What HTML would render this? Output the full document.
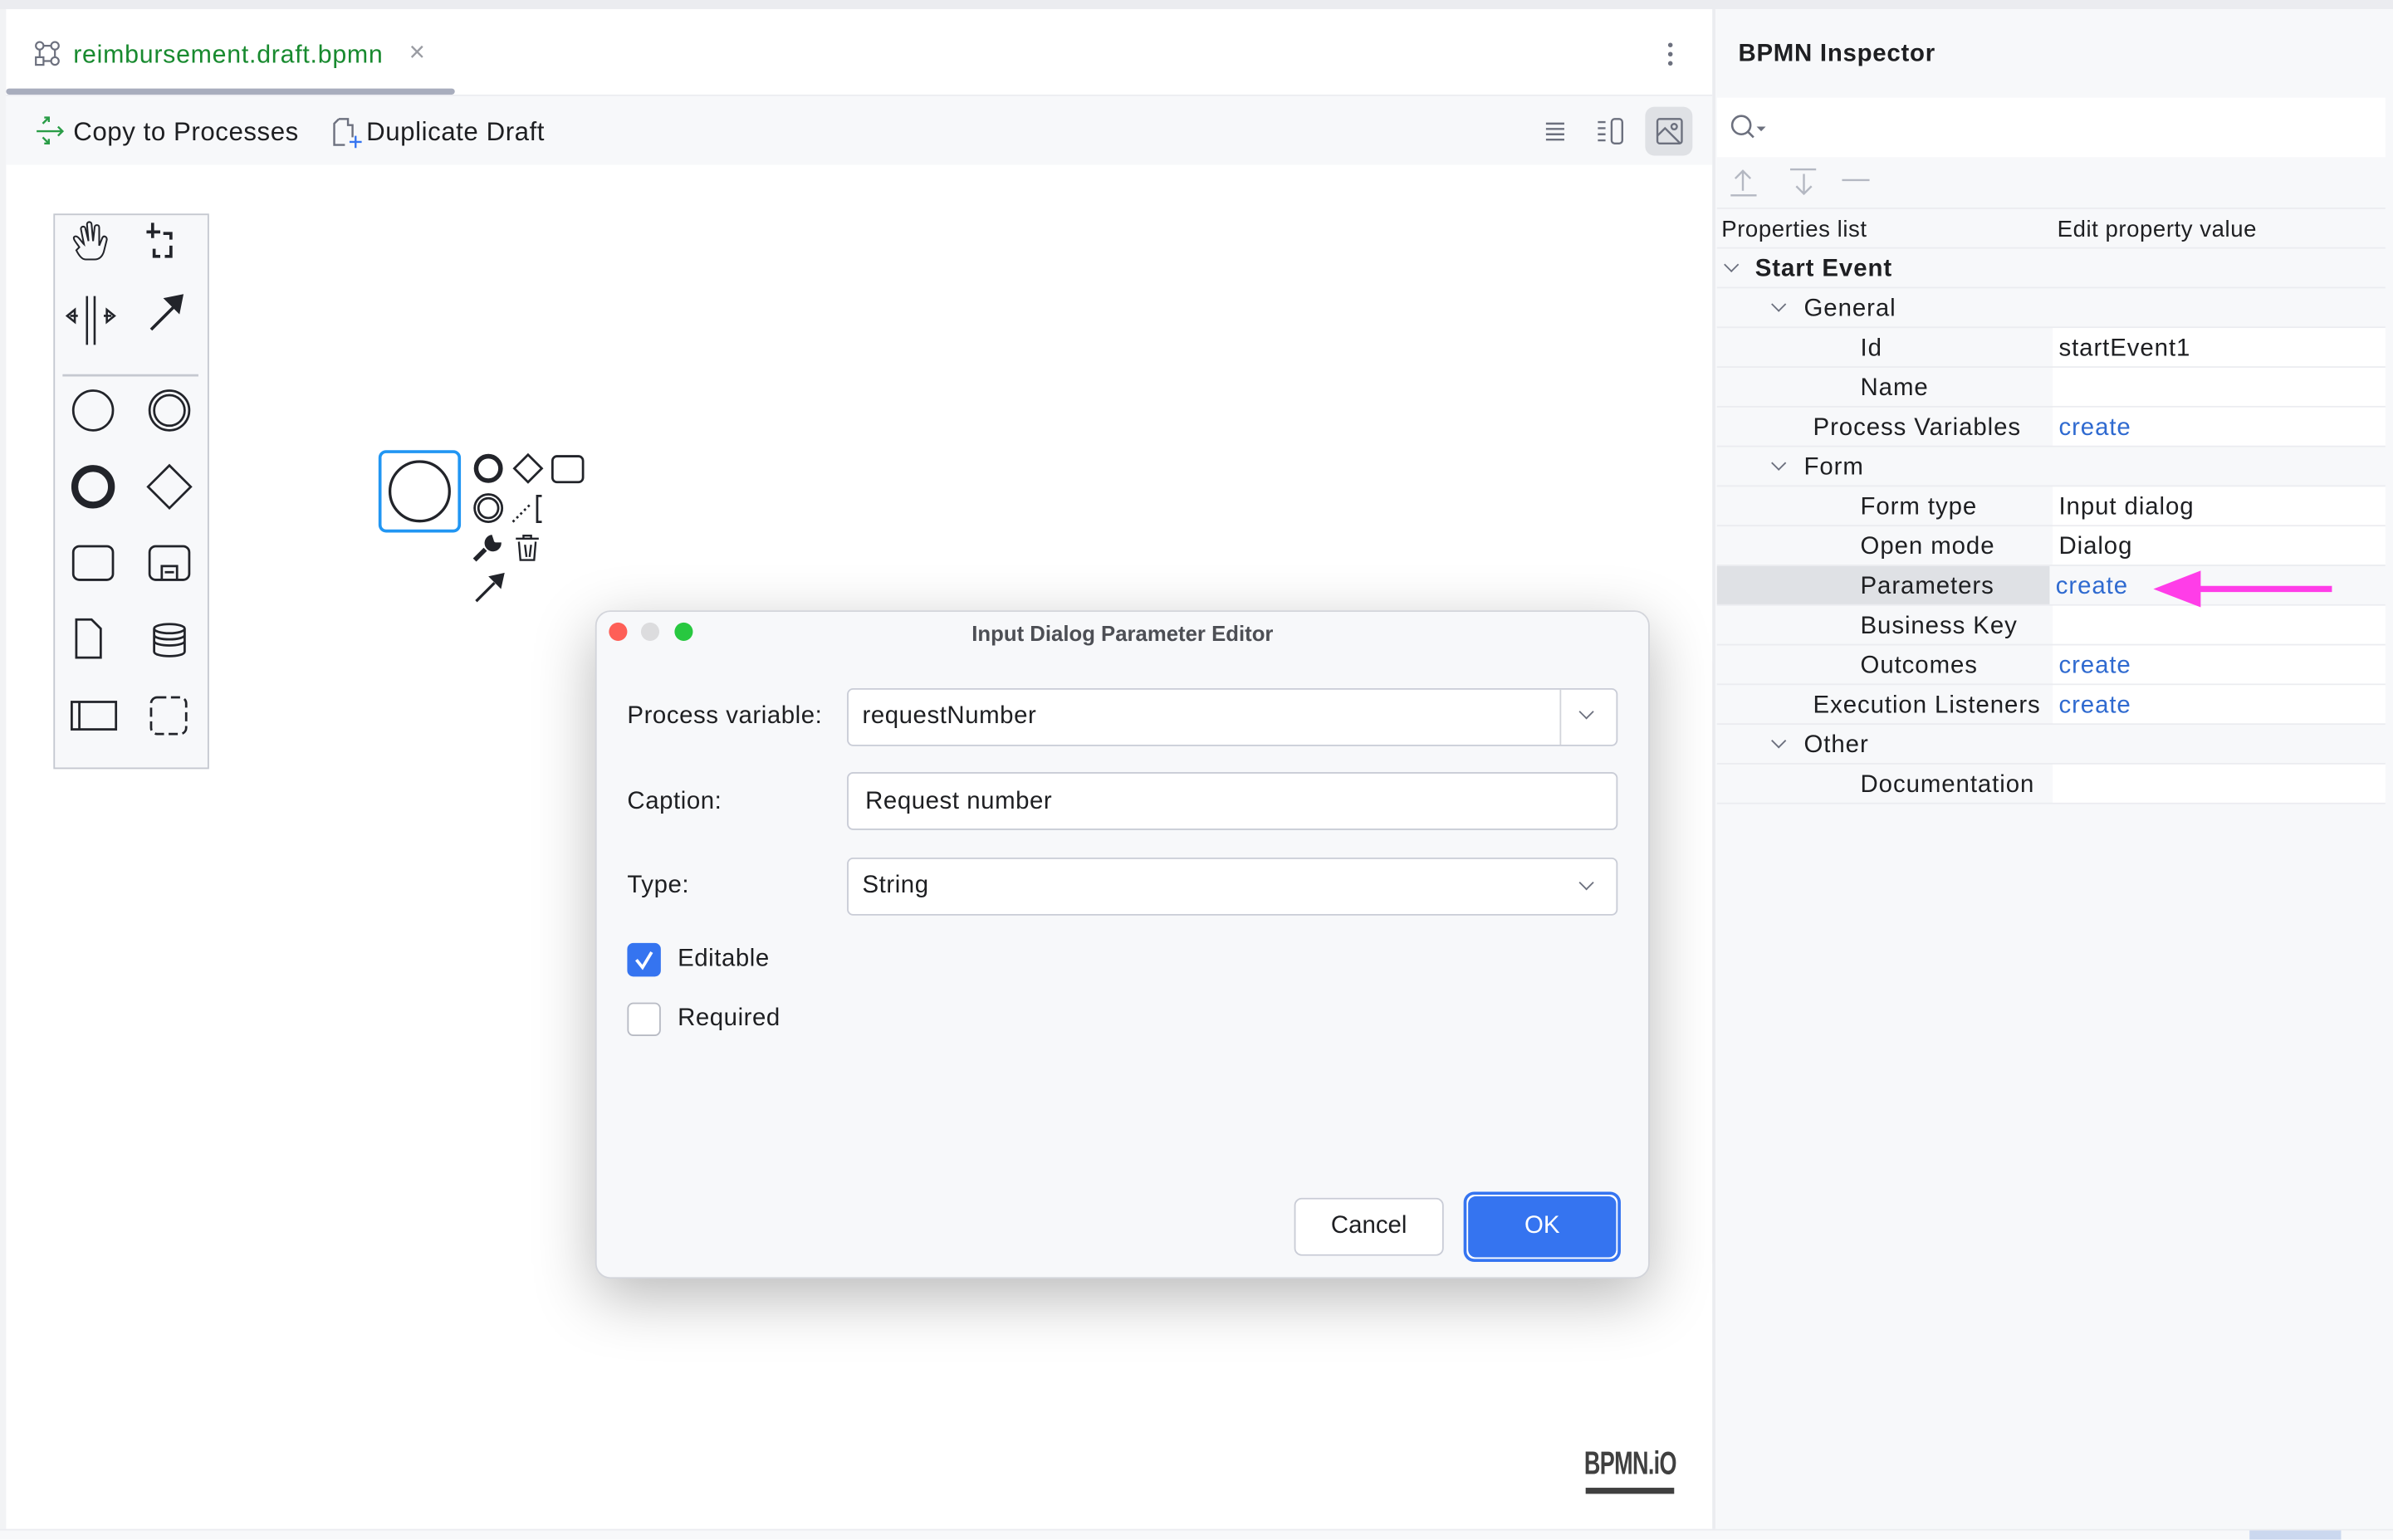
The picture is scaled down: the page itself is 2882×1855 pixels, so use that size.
<!DOCTYPE html>
<html><head><meta charset="utf-8"><style>
*{box-sizing:border-box;margin:0;padding:0}
html,body{width:2882px;height:1854px;overflow:hidden;background:#fff}
#root{position:absolute;left:0;top:0;width:1568px;height:1009px;transform:scale(1.838);transform-origin:0 0;font-family:"Liberation Sans",sans-serif;color:#1e1f22;background:#fff}
.a{position:absolute}
.t{position:absolute;white-space:nowrap;font-size:16px;line-height:20px}
.row{position:absolute;left:1125px;width:438px;height:26px;border-bottom:1px solid #ebecf0}
.row .v{position:absolute;left:220px;top:0;width:218px;height:25px;background:#fff}
.row span{position:absolute;top:4px;font-size:16px;line-height:20px;white-space:nowrap;letter-spacing:.5px}
.lnk{color:#2f6ad0}
.chev{position:absolute;width:7px;height:7px;border-right:1.3px solid #6c707e;border-bottom:1.3px solid #6c707e;transform:rotate(45deg)}
.fld{position:absolute;background:#fff;border:1px solid #c9ccd6;border-radius:4px}
</style></head><body><div id="root">
<div class="a" style="left:0;top:0;width:1568px;height:6px;background:#ebecf0"></div>
<div class="a" style="left:0;top:6px;width:4px;height:1003px;background:#f2f3f5"></div>
<svg class="a" style="left:22px;top:26px" width="18" height="18" viewBox="0 0 18 18" fill="none" stroke="#6c707e" stroke-width="1.2"><circle cx="4" cy="4" r="2.5"/><circle cx="14" cy="4" r="2.5"/><rect x="1.5" y="11.5" width="5" height="5"/><circle cx="14" cy="14" r="2.5"/><path d="M4 6.5v5M6.5 4h5M14 6.5v5M6.5 14h5"/></svg>
<div class="t" style="left:48px;top:26px;color:#188a2f;font-size:16.5px;letter-spacing:.4px">reimbursement.draft.bpmn</div>
<div class="t" style="left:268px;top:24px;color:#9a9ca3;font-size:18px">×</div>
<div class="a" style="left:4px;top:58px;width:294px;height:4px;background:#a8adbd;border-radius:2px"></div>
<div class="a" style="left:4px;top:62px;width:1118px;height:1px;background:#ebecf0"></div>
<div class="a" style="left:1093px;top:28px;width:3px;height:3px;border-radius:50%;background:#6c707e;box-shadow:0 6px 0 #6c707e,0 12px 0 #6c707e"></div>
<div class="a" style="left:4px;top:63px;width:1118px;height:45px;background:#f7f8fa"></div>
<svg class="a" style="left:23px;top:75px" width="20" height="22" viewBox="0 0 20 22" fill="none" stroke="#2a9d47" stroke-width="1.3"><path d="M1 11h17M15 8l3 3-3 3M6 2h3v3M9 2 5 6M6 19H9V16M9 19 5 15"/></svg>
<div class="t" style="left:48px;top:77px;font-size:17px;letter-spacing:.3px">Copy to Processes</div>
<svg class="a" style="left:217px;top:76px" width="22" height="22" viewBox="0 0 22 22" fill="none" stroke-width="1.3"><path d="M5 2h6v4h3v8M5 2 2 5v14h7" stroke="#6c707e"/><path d="M16 13v8M12 17h8" stroke="#3574f0"/></svg>
<div class="t" style="left:240px;top:77px;font-size:17px;letter-spacing:.3px">Duplicate Draft</div>
<svg class="a" style="left:1011px;top:78px" width="16" height="16" viewBox="0 0 16 16" stroke="#6c707e" stroke-width="1.3"><path d="M2 3h12M2 6.5h12M2 10h12M2 13.5h12"/></svg>
<svg class="a" style="left:1045px;top:76px" width="24" height="20" viewBox="0 0 24 20" fill="none" stroke="#6c707e" stroke-width="1.3"><path d="M2 4h5M2 8h5M2 12h5M2 16h5"/><rect x="11" y="2" width="7" height="16" rx="2"/></svg>
<div class="a" style="left:1078px;top:70px;width:31px;height:32px;background:#dfe1e5;border-radius:6px"></div>
<svg class="a" style="left:1084px;top:76px" width="20" height="20" viewBox="0 0 20 20" fill="none" stroke="#6c707e" stroke-width="1.3"><rect x="2" y="2" width="16" height="16" rx="1.5"/><circle cx="13" cy="7" r="1.8"/><path d="M2 13l5-5 10 10"/></svg>
<div class="a" style="left:35px;top:140px;width:102px;height:364px;background:#f7f8fa;border:1px solid #c5c8d0"></div>
<svg class="a" style="left:35px;top:140px" width="102" height="364" viewBox="0 0 102 364" fill="none" stroke="#22242a" stroke-width="1.5">
<path d="M17 22c-2-3-5-6-3-7s4 3 6 5l-2-10c0-2 3-2 3 0l2 8-1-11c0-2 3-2 3 0l1 11 1-9c0-2 3-2 3 0v12l2-5c1-2 3-1 3 1l-2 8c-1 3-3 5-6 5h-6c-2 0-4-2-6-6z" stroke-width="1.1"/>
<path d="M61 12h9M65 6v10M72 13h5v4M77 21v7h-4M70 28h-4v-5" stroke-width="2"/>
<path d="M22 54v32M27 54v32M11 67l5 0M9 67l5-4v8zM38 67l-5 0M40 67l-5-4v8z" stroke-width="1.4"/>
<path d="M64 76l18-18M74 56l10-2-2 10z" fill="#22242a" stroke-width="2"/>
<path d="M6 106h89" stroke="#c5c8d0"/>
<circle cx="26" cy="129" r="13"/>
<circle cx="76" cy="129" r="13"/><circle cx="76" cy="129" r="10"/>
<circle cx="26" cy="179" r="12" stroke-width="4.5"/>
<path d="M76 165l14 14-14 14-14-14z"/>
<rect x="13" y="218" width="26" height="22" rx="4"/>
<rect x="63" y="218" width="26" height="22" rx="4"/><path d="M71 240v-9h10v9M73 235h6"/>
<path d="M15 266h10l6 6v19H15z"/>
<ellipse cx="76" cy="272" rx="10" ry="3"/><path d="M66 272v15c0 4 20 4 20 0v-15M66 276c0 4 20 4 20 0M66 280c0 4 20 4 20 0"/>
<rect x="12" y="320" width="29" height="18"/><path d="M17 320v18"/>
<rect x="64" y="317" width="23" height="24" rx="4" stroke-dasharray="6 3"/>
</svg>
<svg class="a" style="left:240px;top:290px" width="150" height="110" viewBox="240 290 150 110" fill="none" stroke="#22242a">
<rect x="249" y="296" width="52" height="52" rx="4" stroke="#2196f3" stroke-width="2"/>
<circle cx="275" cy="322" r="19.5" stroke-width="1.8"/>
<circle cx="320" cy="307" r="8" stroke-width="3"/>
<path d="M346 298l9 9-9 9-9-9z" stroke-width="1.5"/>
<rect x="362" y="299" width="20" height="17" rx="3" stroke-width="1.5"/>
<circle cx="320" cy="333" r="9" stroke-width="1.5"/><circle cx="320" cy="333" r="6.5" stroke-width="1.5"/>
<path d="M336 342l12-12" stroke-dasharray="1.5 2" stroke-width="1.5"/><path d="M355 325h-3v17h3" stroke-width="1.5"/>
<path d="M311 367l7-7" stroke-width="3"/><path d="M322 351a5 5 0 1 0 6 5l-3 0a2 2 0 0 1-2-2z" fill="#22242a"/>
<path d="M338 353h15M343 353v-2h5v2M340 355l1 12h9l1-12M344 357l1 8M348 357l-1 8" stroke-width="1.3"/>
<path d="M312 394l12-12" stroke-width="1.8"/><path d="M330 376l-9 2 7 7z" fill="#22242a"/>
</svg>
<div class="t" style="left:1038px;top:950px;font-size:21px;font-weight:bold;color:#404040;transform:scaleX(.7);transform-origin:0 0;letter-spacing:-0.5px">BPMN.iO</div>
<div class="a" style="left:1039px;top:975px;width:58px;height:4px;background:#404040"></div>
<div class="a" style="left:0;top:1002px;width:1568px;height:7px;background:#f7f8fa;border-top:1px solid #ebecf0"></div>
<div class="a" style="left:1474px;top:1003px;width:60px;height:6px;background:#cbd8ef"></div>
<div class="a" style="left:1122px;top:6px;width:446px;height:996px;background:#f7f8fa;border-left:2px solid #ebecf0"></div>
<div class="t" style="left:1139px;top:26px;font-weight:bold;font-size:16px;letter-spacing:.4px">BPMN Inspector</div>
<div class="a" style="left:1125px;top:64px;width:438px;height:39px;background:#fff"></div>
<svg class="a" style="left:1133px;top:74px" width="26" height="20" viewBox="0 0 26 20" fill="none" stroke="#6c707e" stroke-width="1.4"><circle cx="8" cy="8" r="6"/><path d="M12 12l4 4"/><path d="M18 9h6l-3 3z" fill="#6c707e" stroke="none"/></svg>
<svg class="a" style="left:1133px;top:108px" width="100" height="22" viewBox="0 0 100 22" fill="none" stroke="#b4b8c2" stroke-width="1.3"><path d="M1 20h17M9 17V4M4 9l5-5 5 5M40 3h17M49 6v13M44 14l5 5 5-5M74 10h18"/></svg>
<div class="a" style="left:1125px;top:136px;width:438px;height:1px;background:#ebecf0"></div>
<div class="t" style="left:1128px;top:141px;font-size:15px;letter-spacing:.3px">Properties list</div>
<div class="t" style="left:1348px;top:141px;font-size:15px;letter-spacing:.3px">Edit property value</div>
<div class="a" style="left:1125px;top:162px;width:438px;height:1px;background:#ebecf0"></div>
<div class="row" style="top:163px"><i class="chev" style="left:6px;top:7px"></i><span style="left:25px;font-weight:bold">Start Event</span></div>
<div class="row" style="top:189px"><i class="chev" style="left:37px;top:7px"></i><span style="left:57px">General</span></div>
<div class="row" style="top:215px"><div class="v"></div><span style="left:94px">Id</span><span style="left:224px">startEvent1</span></div>
<div class="row" style="top:241px"><div class="v"></div><span style="left:94px">Name</span></div>
<div class="row" style="top:267px"><div class="v"></div><span style="left:63px">Process Variables</span><span class="lnk" style="left:224px">create</span></div>
<div class="row" style="top:293px"><i class="chev" style="left:37px;top:7px"></i><span style="left:57px">Form</span></div>
<div class="row" style="top:319px"><div class="v"></div><span style="left:94px">Form type</span><span style="left:224px">Input dialog</span></div>
<div class="row" style="top:345px"><div class="v"></div><span style="left:94px">Open mode</span><span style="left:224px">Dialog</span></div>
<div class="row" style="top:371px"><div class="a" style="left:0;top:0;width:218px;height:25px;background:#dfe1e5"></div><span style="left:94px">Parameters</span><span class="lnk" style="left:222px">create</span></div>
<div class="row" style="top:397px"><div class="v"></div><span style="left:94px">Business Key</span></div>
<div class="row" style="top:423px"><div class="v"></div><span style="left:94px">Outcomes</span><span class="lnk" style="left:224px">create</span></div>
<div class="row" style="top:449px"><div class="v"></div><span style="left:63px">Execution Listeners</span><span class="lnk" style="left:224px">create</span></div>
<div class="row" style="top:475px"><i class="chev" style="left:37px;top:7px"></i><span style="left:57px">Other</span></div>
<div class="row" style="top:501px"><div class="v"></div><span style="left:94px">Documentation</span></div>
<svg class="a" style="left:1410px;top:372px" width="120" height="28" viewBox="0 0 120 28"><path d="M30 12h88v4H30z" fill="#ff3de8"/><path d="M1 14l31-12v24z" fill="#ff3de8"/></svg>
<div class="a" style="left:390px;top:400px;width:691px;height:438px;background:#f7f8fa;border:1px solid #d3d5db;border-radius:10px;box-shadow:0 12px 40px rgba(0,0,0,.28)"></div>
<div class="a" style="left:399px;top:408px;width:12px;height:12px;border-radius:50%;background:#fe5f57"></div>
<div class="a" style="left:420px;top:408px;width:12px;height:12px;border-radius:50%;background:#dcdcde"></div>
<div class="a" style="left:442px;top:408px;width:12px;height:12px;border-radius:50%;background:#28c840"></div>
<div class="t" style="left:390px;width:691px;text-align:center;top:405px;font-size:14px;font-weight:bold;color:#4d4f55">Input Dialog Parameter Editor</div>
<div class="t" style="left:411px;top:460px;letter-spacing:.3px">Process variable:</div>
<div class="fld" style="left:555px;top:451px;width:505px;height:38px"></div>
<div class="a" style="left:1022px;top:452px;width:1px;height:36px;background:#d3d5db"></div>
<i class="chev" style="left:1036px;top:463px;border-color:#6c707e"></i>
<div class="t" style="left:565px;top:460px;letter-spacing:.3px">requestNumber</div>
<div class="t" style="left:411px;top:516px;letter-spacing:.3px">Caption:</div>
<div class="fld" style="left:555px;top:506px;width:505px;height:38px"></div>
<div class="t" style="left:567px;top:516px;letter-spacing:.3px">Request number</div>
<div class="t" style="left:411px;top:571px;letter-spacing:.3px">Type:</div>
<div class="fld" style="left:555px;top:562px;width:505px;height:38px"></div>
<i class="chev" style="left:1036px;top:575px"></i>
<div class="t" style="left:565px;top:571px;letter-spacing:.3px">String</div>
<div class="a" style="left:411px;top:618px;width:22px;height:22px;background:#3574f0;border-radius:4px"></div>
<svg class="a" style="left:411px;top:618px" width="22" height="22" viewBox="0 0 22 22" fill="none" stroke="#fff" stroke-width="2"><path d="M6 11l4 5 6-10"/></svg>
<div class="t" style="left:444px;top:619px;letter-spacing:.3px">Editable</div>
<div class="a" style="left:411px;top:657px;width:22px;height:22px;background:#fff;border:1px solid #b8bbc4;border-radius:4px"></div>
<div class="t" style="left:444px;top:658px;letter-spacing:.3px">Required</div>
<div class="a" style="left:848px;top:785px;width:98px;height:38px;background:#fff;border:1px solid #c9ccd6;border-radius:5px"></div>
<div class="t" style="left:848px;width:98px;text-align:center;top:794px">Cancel</div>
<div class="a" style="left:959px;top:781px;width:103px;height:46px;border:2px solid #3574f0;border-radius:7px;background:#fff"></div>
<div class="a" style="left:962px;top:784px;width:97px;height:40px;background:#3574f0;border-radius:5px"></div>
<div class="t" style="left:962px;width:97px;text-align:center;top:794px;color:#fff">OK</div>
</div></body></html>
